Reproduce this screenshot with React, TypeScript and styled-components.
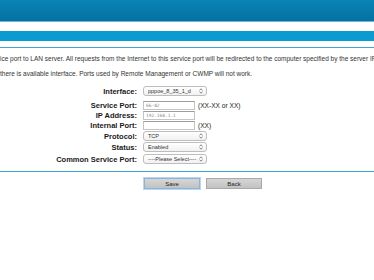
import React from 'react';
import styled, { createGlobalStyle } from 'styled-components';

const GlobalStyle = createGlobalStyle`
  html, body {
    margin: 0;
    padding: 0;
    background: #ffffff;
    overflow: hidden;
  }
  body {
    font-family: 'Liberation Sans', Arial, sans-serif;
    color: #222222;
  }
`;

const Page = styled.div`
  width: 374px;
  height: 280px;
  display: flex;
  flex-direction: column;
`;

const TopBand = styled.div`
  height: 21px;
  background: linear-gradient(#0b83b6, #0571a2);
  border-bottom: 1px solid #6cb8da;
`;

const NavBand = styled.div`
  height: 10px;
  margin-top: 9px;
  background: #0c9bd0;
`;

const Rule = styled.div<{ $mt: number }>`
  height: 1px;
  margin-top: ${(p) => p.$mt}px;
  background: #3ea2d2;
`;

const Intro = styled.p`
  margin: 3px 0 0;
  font-size: 6.5px;
  line-height: 15px;
  white-space: nowrap;
  color: #333333;
`;

const Form = styled.div`
  margin-top: 5px;
  display: flex;
  flex-direction: column;
`;

const Row = styled.div<{ $mt?: number }>`
  display: grid;
  grid-template-columns: 137px auto;
  column-gap: 6px;
  align-items: center;
  height: 10px;
  margin-top: ${(p) => p.$mt ?? 0}px;
`;

const Label = styled.span`
  text-align: right;
  font-weight: bold;
  font-size: 7.5px;
  color: #1a1a1a;
`;

const Field = styled.div`
  display: flex;
  align-items: center;
  gap: 3px;
`;

const TextBox = styled.input`
  box-sizing: border-box;
  width: 52px;
  height: 9px;
  padding: 0 2px;
  border: 1px solid #c4c4c4;
  border-top-color: #9d9d9d;
  font-family: 'DejaVu Sans Mono', monospace;
  font-size: 4.5px;
  color: #8a8a8a;
  outline: none;
  &::placeholder {
    color: #8a8a8a;
  }
`;

const Hint = styled.span`
  font-size: 6.6px;
  color: #222222;
`;

const SelectBox = styled.div`
  box-sizing: border-box;
  width: 64px;
  height: 10px;
  padding: 0 3px 0 4px;
  display: flex;
  align-items: center;
  justify-content: space-between;
  border: 1px solid #bdbdbd;
  border-radius: 3px;
  background: linear-gradient(#ffffff, #f1f1f1);
  font-size: 5.5px;
  color: #333333;
`;

const Buttons = styled.div`
  margin-top: 6px;
  padding-left: 144px;
  display: flex;
  gap: 6px;
`;

const Button = styled.button<{ $focused?: boolean }>`
  box-sizing: border-box;
  width: 56px;
  height: 11px;
  padding: 0;
  border: 1px solid ${(p) => (p.$focused ? '#8ab4dc' : '#a9a9a9')};
  box-shadow: ${(p) => (p.$focused ? '0 0 0 1px #bcd6ee' : 'none')};
  background: linear-gradient(#d6d6d6, #c2c2c2);
  font-family: 'Liberation Sans', Arial, sans-serif;
  font-size: 6px;
  color: #222222;
`;

const Arrows = () => (
  <svg width="4" height="6" viewBox="0 0 4 6">
    <path d="M0.5 2.4 L2 0.8 L3.5 2.4 M0.5 3.6 L2 5.2 L3.5 3.6" fill="none" stroke="#555" strokeWidth="0.7" />
  </svg>
);

const Select = ({ value }: { value: string }) => (
  <SelectBox>
    <span>{value}</span>
    <Arrows />
  </SelectBox>
);

const App = (): JSX.Element => {
  return (
    <Page>
      <GlobalStyle />
      <TopBand />
      <NavBand />
      <Rule $mt={6} />
      <Intro>
        ice port to LAN server. All requests from the Internet to this service port will be redirected to the computer specified by the server IP
        <br />
        there is available interface. Ports used by Remote Management or CWMP will not work.
      </Intro>
      <Form>
        <Row>
          <Label>Interface:</Label>
          <Field>
            <Select value="pppoe_8_35_1_d" />
          </Field>
        </Row>
        <Row $mt={4}>
          <Label>Service Port:</Label>
          <Field>
            <TextBox placeholder="66-82" />
            <Hint>(XX-XX or XX)</Hint>
          </Field>
        </Row>
        <Row>
          <Label>IP Address:</Label>
          <Field>
            <TextBox placeholder="192.168.1.1" />
          </Field>
        </Row>
        <Row>
          <Label>Internal Port:</Label>
          <Field>
            <TextBox />
            <Hint>(XX)</Hint>
          </Field>
        </Row>
        <Row $mt={1}>
          <Label>Protocol:</Label>
          <Field>
            <Select value="TCP" />
          </Field>
        </Row>
        <Row $mt={1}>
          <Label>Status:</Label>
          <Field>
            <Select value="Enabled" />
          </Field>
        </Row>
        <Row $mt={2}>
          <Label>Common Service Port:</Label>
          <Field>
            <Select value="----Please Select----" />
          </Field>
        </Row>
      </Form>
      <Rule $mt={7} />
      <Buttons>
        <Button $focused>Save</Button>
        <Button>Back</Button>
      </Buttons>
    </Page>
  );
};

export default App;
